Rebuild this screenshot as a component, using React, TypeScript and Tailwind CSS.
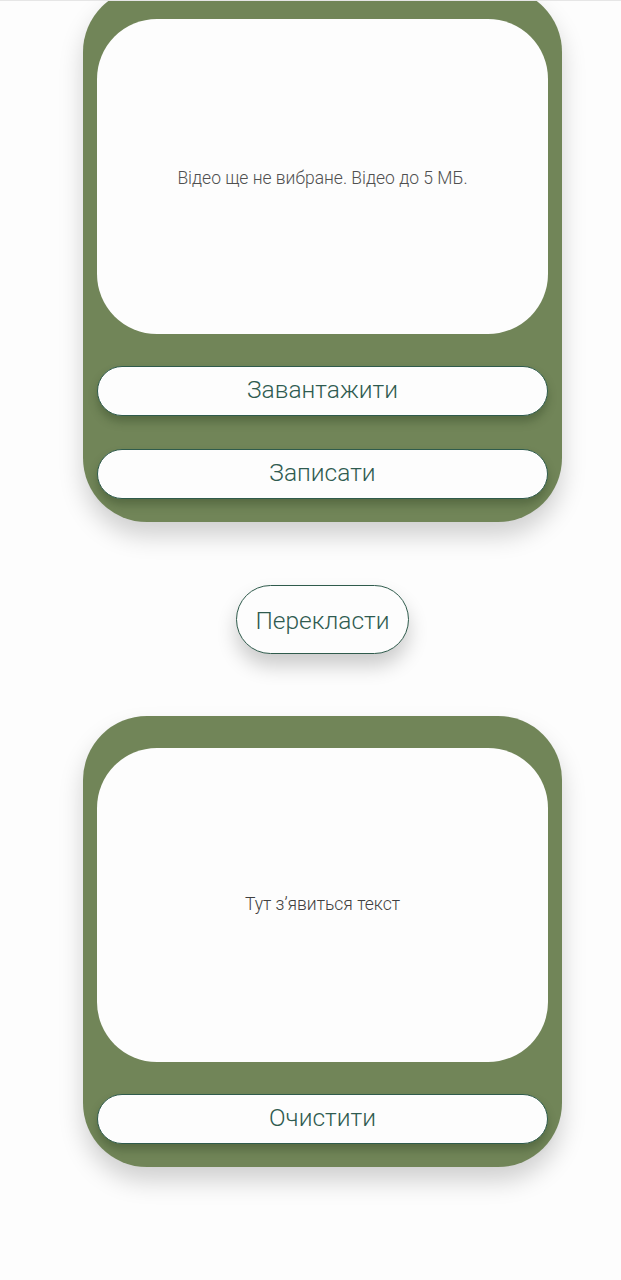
import React from 'react';

const PillButton: React.FC<{ label: string }> = ({ label }) => (
  <button className="w-full h-[50px] rounded-full bg-[#fdfdfd] border border-[#2f5b4c] text-[24.5px] font-light text-[#2f5b50] leading-none pb-[2px] shadow-[0_6px_8px_rgba(40,60,30,0.35)]">
    {label}
  </button>
);

export default function App() {
  return (
    <div className="min-h-[1280px] bg-[#fdfdfd] border-t border-[#e6e6e6] overflow-hidden font-['Roboto','Liberation_Sans',sans-serif]">
      <div className="w-[479px] ml-[83px] -mt-[13px] flex flex-col items-center">
        {/* Video card */}
        <div className="w-full bg-[#718558] rounded-[64px] px-[14px] pt-[31px] pb-[23px] shadow-[0_14px_24px_rgba(0,0,0,0.18)]">
          <div className="h-[315px] bg-[#fdfdfd] rounded-[60px] flex items-center justify-center">
            <p className="text-[17.5px] font-light text-[#505050] mt-[3px]">Відео ще не вибране. Відео до 5 МБ.</p>
          </div>
          <div className="mt-[32px] flex flex-col gap-[33px]">
            <PillButton label="Завантажити" />
            <PillButton label="Записати" />
          </div>
        </div>

        {/* Translate */}
        <button className="mt-[63px] w-[173px] h-[69px] rounded-full bg-[#fdfdfd] border border-[#2f5b4c] text-[24.5px] font-light text-[#2f5b50] leading-none pt-[3px] shadow-[0_12px_20px_rgba(0,0,0,0.2)]">
          Перекласти
        </button>

        {/* Result card */}
        <div className="mt-[62px] w-full bg-[#718558] rounded-[64px] px-[14px] pt-[32px] pb-[23px] shadow-[0_14px_24px_rgba(0,0,0,0.18)]">
          <div className="h-[314px] bg-[#fdfdfd] rounded-[60px] flex items-center justify-center">
            <p className="text-[17.5px] font-light text-[#404040] -mt-[2px]">Тут з’явиться текст</p>
          </div>
          <div className="mt-[32px]">
            <PillButton label="Очистити" />
          </div>
        </div>
      </div>
    </div>
  );
}
